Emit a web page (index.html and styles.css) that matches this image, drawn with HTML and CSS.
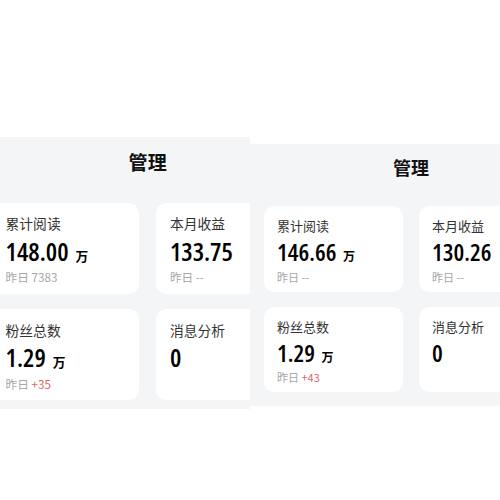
FILE: index.html
```html
<!DOCTYPE html>
<html lang="zh-CN">
<head>
    <meta charset="UTF-8">
    <title>管理</title>
    <link rel="stylesheet" href="styles.css">
</head>
<body>

<div class="stage">
    <div class="shot shot-left">
        <section class="panel panel-large">
            <div class="panel-head"><h1 class="panel-title">管理</h1></div>
            <div class="stats">
                <div class="stat">
                    <div class="stat-label">累计阅读</div>
                    <div class="stat-value">148.00<span class="stat-unit">万</span></div>
                    <div class="stat-sub">昨日 7383</div>
                </div>
                <div class="stat">
                    <div class="stat-label">本月收益</div>
                    <div class="stat-value">133.75</div>
                    <div class="stat-sub">昨日 --</div>
                </div>
                <div class="stat">
                    <div class="stat-label">粉丝总数</div>
                    <div class="stat-value">1.29<span class="stat-unit">万</span></div>
                    <div class="stat-sub">昨日 <span class="up">+35</span></div>
                </div>
                <div class="stat">
                    <div class="stat-label">消息分析</div>
                    <div class="stat-value">0</div>
                </div>
            </div>
        </section>
    </div>

    <div class="shot shot-right">
        <section class="panel">
            <div class="panel-head"><h1 class="panel-title">管理</h1></div>
            <div class="stats">
                <div class="stat">
                    <div class="stat-label">累计阅读</div>
                    <div class="stat-value">146.66<span class="stat-unit">万</span></div>
                    <div class="stat-sub">昨日 --</div>
                </div>
                <div class="stat">
                    <div class="stat-label">本月收益</div>
                    <div class="stat-value">130.26</div>
                    <div class="stat-sub">昨日 --</div>
                </div>
                <div class="stat">
                    <div class="stat-label">粉丝总数</div>
                    <div class="stat-value">1.29<span class="stat-unit">万</span></div>
                    <div class="stat-sub">昨日 <span class="up">+43</span></div>
                </div>
                <div class="stat">
                    <div class="stat-label">消息分析</div>
                    <div class="stat-value">0</div>
                </div>
            </div>
        </section>
    </div>
</div>

</body>
</html>
```

FILE: styles.css
```css
body {
    margin: 0;
    background: #fff;
    font-family: "Noto Sans CJK SC", "Noto Sans", sans-serif;
    overflow: hidden;
}

.stage {
    display: flex;
    align-items: flex-start;
    width: 500px;
    height: 500px;
    overflow: hidden;
}

.shot {
    flex: none;
}

.shot-left {
    width: 250px;
    overflow: hidden;
    margin-top: 137px;
}

.shot-left .panel {
    margin-left: -23px;
}

.shot-right {
    margin-top: 144px;
}

.panel {
    font-size: 16px;
    box-sizing: border-box;
    width: 20.125em;
    padding: 0 0.875em 0.875em;
    background: #f4f5f7;
}

.panel-large {
    font-size: 16.96px;
    padding-bottom: 0.5em;
}

.panel-head {
    height: 2.875em;
    display: flex;
    align-items: center;
    justify-content: center;
}

.panel-title {
    margin: 0;
    font-size: 1.125em;
    font-weight: 700;
    color: #111;
}

.stats {
    display: grid;
    grid-template-columns: 1fr 1fr;
    column-gap: 1em;
    row-gap: 0.9375em;
    margin-top: 1em;
}

.stat {
    background: #fff;
    border-radius: 0.625em;
    padding: 0.6875em 0.8125em 0.4375em;
}

.stat-label {
    font-size: 0.8125em;
    line-height: 1.385;
    color: #333;
}

.stat-value {
    margin-top: 0.125em;
    font-family: "Open Sans", "Roboto", sans-serif;
    font-stretch: 75%;
    font-size: 1.5em;
    line-height: 1.1667;
    font-weight: 600;
    color: #000;
}

.stat-unit {
    font-family: "Noto Sans CJK SC", sans-serif;
    font-stretch: normal;
    font-size: 0.5em;
    font-weight: 700;
    margin-left: 0.55em;
}

.stat-sub {
    margin-top: 0.25em;
    font-size: 0.6875em;
    line-height: 1.4545;
    color: #a6a6a6;
}

.stat-sub .up {
    color: #e06666;
}
```
